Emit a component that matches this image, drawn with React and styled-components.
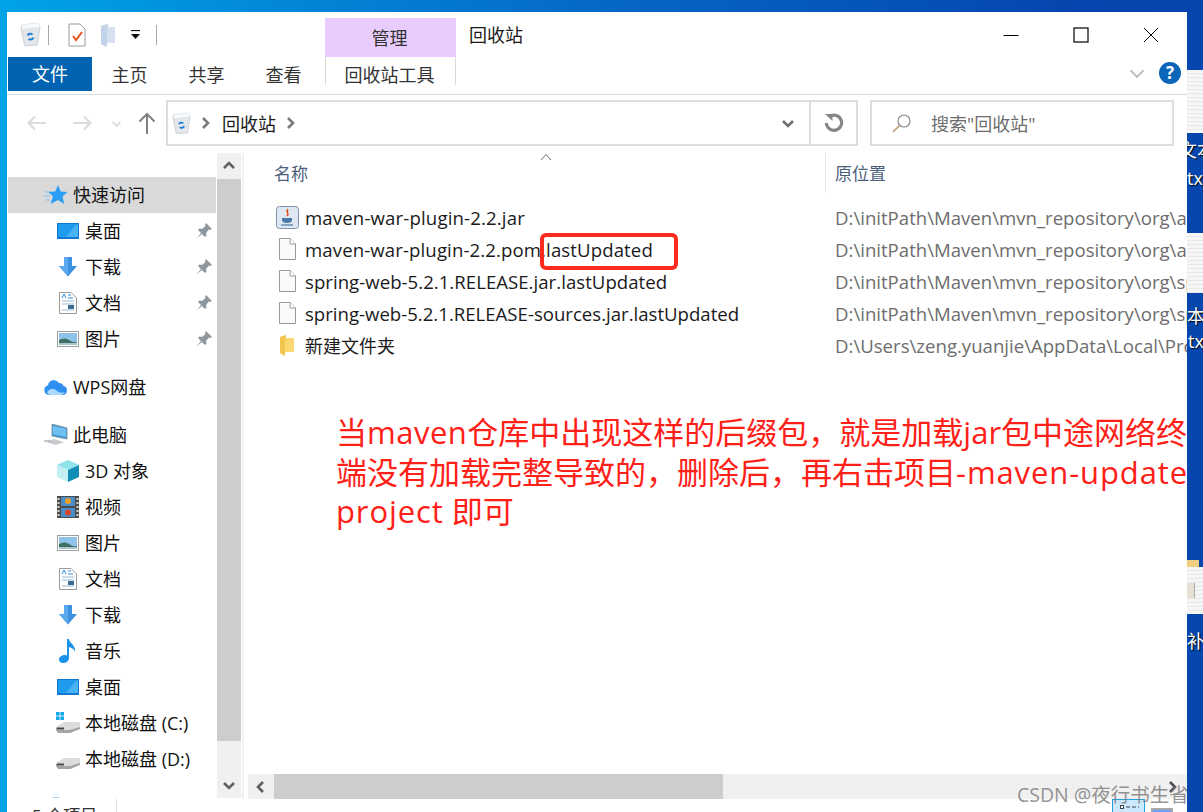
import styled, { createGlobalStyle } from 'styled-components';

const GlobalStyle = createGlobalStyle`
  html, body {
    margin: 0;
    padding: 0;
    overflow: hidden;
    background: #0746ac;
  }
  * {
    box-sizing: border-box;
  }
`;

const Desktop = styled.div`
  position: relative;
  width: 1203px;
  height: 812px;
  padding: 12px 16px 0 7px;
  overflow: hidden;
  background: linear-gradient(90deg, #00a3e6 0%, #0568c6 50%, #0645ad 90%, #0746ac 100%);
  font-family: 'Open Sans', 'Noto Sans CJK SC', sans-serif;
  font-size: 18px;
  color: #1a1a1a;
`;

const Window = styled.div`
  position: relative;
  z-index: 1;
  display: flex;
  flex-direction: column;
  width: 1180px;
  height: 800px;
  overflow: hidden;
  background: #fff;
`;

/* title bar */
const TitleBar = styled.div`
  display: flex;
  height: 45px;
  flex: none;
`;

const QuickAccess = styled.div`
  display: flex;
  align-items: center;
  width: 318px;
  height: 45px;
  padding: 0 0 0 13px;
`;

const QuickSep = styled.div`
  width: 1px;
  height: 20px;
  background: #a8a8a8;
`;

const QuickGap = styled.div`
  flex: none;
  width: ${(p) => p.$width}px;
`;

const ContextLabel = styled.div`
  width: 131px;
  height: 39px;
  margin-top: 6px;
  padding: 2px 2px 0 0;
  text-align: center;
  line-height: 36px;
  font-size: 18px;
  color: #333;
  background: #e8ccfd;
`;

const WindowTitle = styled.div`
  margin-left: 13px;
  line-height: 47px;
  font-size: 18px;
`;

const WindowControls = styled.div`
  display: flex;
  margin-left: auto;
  padding: 2px 1px 0 0;
`;

const ControlButton = styled.div`
  display: flex;
  align-items: flex-start;
  justify-content: center;
  width: 70px;
  padding-top: 13px;
`;

/* ribbon tabs */
const Ribbon = styled.div`
  display: flex;
  flex: none;
  height: 38px;
  padding-left: 1px;
  border-bottom: 1px solid #dadada;
`;

const FileTab = styled.div`
  width: 84px;
  height: 34px;
  text-align: center;
  line-height: 35px;
  font-size: 18px;
  color: #fff;
  background: #0063b1;
`;

const Tab = styled.div`
  width: 77px;
  height: 34px;
  padding-right: 2px;
  text-align: center;
  line-height: 37px;
  font-size: 18px;
  color: #333;
`;

const ToolTab = styled(Tab)`
  width: 131px;
  height: 28px;
  margin-left: 2px;
  line-height: 37px;
  overflow: visible;
  border-left: 1px solid #dadada;
  border-right: 1px solid #dadada;
`;

const RibbonRight = styled.div`
  display: flex;
  align-items: center;
  gap: 13px;
  margin-left: auto;
  padding: 0 6px 6px 0;
`;

const HelpBadge = styled.div`
  width: 22px;
  height: 22px;
  border-radius: 50%;
  text-align: center;
  line-height: 22px;
  font-size: 17px;
  font-weight: 700;
  color: #fff;
  background: #0a66b8;
`;

/* address row */
const AddressRow = styled.div`
  display: flex;
  flex: none;
  height: 58px;
  padding-top: 5px;
`;

const NavButtons = styled.div`
  display: flex;
  align-items: center;
  width: 159px;
  height: 46px;
  padding-left: 8px;
`;

const NavButton = styled.div`
  display: flex;
  align-items: center;
  justify-content: center;
  width: ${(p) => p.$width}px;
`;

const AddressBox = styled.div`
  display: flex;
  align-items: center;
  width: 692px;
  height: 46px;
  padding-left: 4px;
  border: 2px solid #dedede;
`;

const AddressIcon = styled.div`
  display: flex;
  margin-right: 7px;
`;

const Crumb = styled.span`
  margin: 0 7px 0 10px;
  font-size: 18px;
`;

const AddressEnd = styled.div`
  display: flex;
  align-items: center;
  height: 100%;
  margin-left: auto;
`;

const AddressCaret = styled.div`
  display: flex;
  align-items: center;
  justify-content: center;
  width: 45px;
  height: 100%;
  border-right: 2px solid #dedede;
`;

const RefreshButton = styled.div`
  display: flex;
  align-items: center;
  justify-content: center;
  width: 45px;
`;

const SearchBox = styled.div`
  display: flex;
  align-items: center;
  gap: 20px;
  width: 304px;
  height: 46px;
  margin-left: 12px;
  padding-left: 20px;
  font-size: 18px;
  color: #6d6d6d;
  border: 2px solid #dedede;
`;

/* body */
const Body = styled.div`
  display: flex;
  flex: none;
  height: 646px;
  padding-left: 1px;
`;

const Sidebar = styled.div`
  flex: none;
  width: 209px;
  height: 645px;
  padding-top: 24px;
  overflow: hidden;
`;

const NavGroup = styled.div`
  margin-bottom: 12px;
`;

const NavRow = styled.div`
  display: flex;
  align-items: center;
  height: 36px;
  width: 208px;
  padding-left: ${(p) => (p.$child ? 48 : 36)}px;
  background: ${(p) => (p.$active ? '#d9d9d9' : 'transparent')};
`;

const NavIcon = styled.div`
  display: flex;
  align-items: center;
  justify-content: center;
  flex: none;
  width: 24px;
  height: 26px;
  margin-right: 5px;
`;

const NavLabel = styled.span`
  flex: 1;
  padding-bottom: 2px;
  white-space: nowrap;
  font-size: 18px;
  color: #111;
`;

const PinSlot = styled.div`
  display: flex;
  margin-right: 4px;
`;

const VScroll = styled.div`
  display: flex;
  flex-direction: column;
  flex: none;
  width: 24px;
  height: 645px;
  background: #f0f0f0;
`;

const ScrollArrow = styled.div`
  display: flex;
  align-items: center;
  justify-content: center;
  flex: none;
  width: ${(p) => p.$size || 24}px;
  height: ${(p) => p.$high || 26}px;
`;

const VThumb = styled.div`
  flex: none;
  height: 562px;
  background: #cdcdcd;
`;

const VSpacer = styled.div`
  flex: 1;
`;

const PaneDivider = styled.div`
  flex: none;
  width: 4px;
  margin-left: 1px;
  border-left: 2px solid #f2f2f2;
`;

const Main = styled.div`
  display: flex;
  flex-direction: column;
  flex: 1;
  min-width: 0;
`;

const HeaderRow = styled.div`
  position: relative;
  display: grid;
  grid-template-columns: 579px 1fr;
  flex: none;
  height: 40px;
`;

const HeaderCell = styled.div`
  height: 40px;
  line-height: 41px;
  font-size: 17px;
  color: #4c607a;
  padding-left: ${(p) => p.$left}px;
  border-left: ${(p) => (p.$divider ? '1px solid #e5e5e5' : 'none')};
`;

const SortCaret = styled.div`
  position: absolute;
  left: 294px;
  top: 0;
  line-height: 0;
`;

const FileList = styled.div`
  flex: 1;
  padding-top: 8px;
  overflow: hidden;
`;

const FileRow = styled.div`
  display: grid;
  grid-template-columns: 579px 1fr;
  align-items: center;
  height: 32px;
  font-size: 18.6px;
`;

const FileName = styled.div`
  display: flex;
  align-items: center;
  padding-left: 29px;
  white-space: nowrap;
  letter-spacing: ${(p) => p.$track || 0}px;
  ${(p) => p.$cjk && 'font-size: 18px;'}
`;

const FileIcon = styled.div`
  display: flex;
  align-items: center;
  justify-content: center;
  flex: none;
  width: 24px;
  margin-right: 6px;
`;

const FileLocation = styled.div`
  padding-left: 10px;
  white-space: nowrap;
  overflow: hidden;
  color: #6d6d6d;
`;

const HScroll = styled.div`
  display: flex;
  flex: none;
  height: 25px;
  margin-left: 2px;
  background: #f0f0f0;
`;

const HThumb = styled.div`
  width: 449px;
  background: #cdcdcd;
`;

const HRight = styled.div`
  display: flex;
  align-items: center;
  justify-content: center;
  width: 26px;
  margin-left: auto;
  margin-right: 2px;
`;

/* status bar */
const StatusBar = styled.div`
  display: flex;
  flex: none;
  height: 34px;
  padding-left: 25px;
  line-height: 34px;
  font-size: 17px;
  color: #333;
`;

const StatusCount = styled.div`
  width: 85px;
  height: 34px;
  border-right: 1px solid #e0e0e0;
`;

const ViewButtons = styled.div`
  display: flex;
  gap: 6px;
  margin-left: auto;
  padding-right: 14px;
`;

const ViewDetails = styled.div`
  width: 33px;
  height: 30px;
  padding: 4px 0 0 7px;
  line-height: 0;
  background: #cce8ff;
  border: 1px solid #26a0da;
`;

const ViewLarge = styled.div`
  width: 22px;
  height: 22px;
  margin-top: 9px;
  border: 2px solid #a8a8a8;
  background: linear-gradient(#6f9eff 0 8px, #fff 8px);
`;

/* things drawn over the window */
const RedBox = styled.div`
  position: absolute;
  left: 533px;
  top: 221px;
  width: 138px;
  height: 37px;
  border: 4px solid #fb2a1e;
  border-radius: 6px;
`;

const Annotation = styled.div`
  position: absolute;
  left: 329px;
  top: 401px;
  white-space: nowrap;
  font-size: 31px;
  line-height: 39.5px;
  color: #ff2018;
`;

const Latin = styled.span`
  letter-spacing: ${(p) => p.$track}px;
`;

const Watermark = styled.div`
  position: absolute;
  left: 1010px;
  top: 767px;
  white-space: nowrap;
  font-size: 19.5px;
  color: rgba(120, 120, 120, 0.8);
`;

const DesktopFile = styled.div`
  position: absolute;
  left: 1187px;
  top: ${(p) => p.$top}px;
  width: 16px;
  height: ${(p) => p.$high}px;
  background: repeating-linear-gradient(#f6f6f6 0 3px, #e8e8e8 3px 4px);
`;

const DesktopFolderTab = styled.div`
  position: absolute;
  left: 1187px;
  top: 560px;
  width: 12px;
  height: 7px;
  background: #f0d080;
`;

const DesktopThumb = styled.div`
  position: absolute;
  left: 1187px;
  top: 583px;
  width: 8px;
  height: 15px;
  background: #e7e1d4;
  border-right: 1px solid #a8a8a8;
`;

const DesktopLabel = styled.div`
  position: absolute;
  left: ${(p) => p.$left}px;
  top: ${(p) => p.$top}px;
  white-space: nowrap;
  font-size: 18px;
  line-height: 20px;
  color: #fff;
  text-shadow: 1px 1px 1px #000;
`;

/* icons */
function RecycleBin({ size = 21 }) {
  return (
    <svg width={size} height={size * 1.15} viewBox="0 0 22 25">
      <path d="M2 3 L19 1 L21 5 L18 24 L5 25 L1 6 Z" fill="#e3e6ea" stroke="#c3c8cd" strokeWidth="0.8" />
      <path d="M2 3 L19 1 L21 5 L2 7 Z" fill="#f8f9fa" />
      <path d="M8 14 a3 3 0 0 1 5 -1 M14 16 a3 3 0 0 1 -5 1.4" fill="none" stroke="#1b7ed6" strokeWidth="2" />
    </svg>
  );
}

const CheckDoc = () => (
  <svg width="18" height="24" viewBox="0 0 18 24">
    <path d="M1 1 H12 L17 6 V23 H1 Z" fill="#fff" stroke="#9b9b9b" />
    <path d="M5 13 L8 17 L14 9" fill="none" stroke="#e8541c" strokeWidth="2" />
  </svg>
);

const PaleFolder = () => (
  <svg width="16" height="24" viewBox="0 0 16 24">
    <path d="M1 3 L8 1 V4 H15 V20 H7 V24 L1 21 Z" fill="#d6e1f0" />
    <path d="M8 1 L1 3 V21 L7 24 V7 Z" fill="#c2d2e8" />
  </svg>
);

const QuickCaret = () => (
  <svg width="11" height="10" viewBox="0 0 11 10">
    <path d="M1 0.5 H10" stroke="#111" strokeWidth="1.2" />
    <path d="M1 4 H10 L5.5 9 Z" fill="#111" />
  </svg>
);

const MinIcon = () => (
  <svg width="16" height="16" viewBox="0 0 16 16">
    <path d="M0.5 8.5 H15.5" stroke="#000" strokeWidth="1" />
  </svg>
);

const MaxIcon = () => (
  <svg width="16" height="16" viewBox="0 0 16 16">
    <rect x="1" y="1" width="14" height="14" fill="none" stroke="#000" strokeWidth="1.2" />
  </svg>
);

const CloseIcon = () => (
  <svg width="16" height="16" viewBox="0 0 16 16">
    <path d="M1 1 L15 15 M15 1 L1 15" stroke="#000" strokeWidth="1" />
  </svg>
);

const Chevron = ({ dir = 'down', color = '#606060', size = 14, width = 2.6 }) => {
  const paths = {
    down: 'M2 5 L7 10 L12 5',
    up: 'M2 9 L7 4 L12 9',
    left: 'M9 2 L4 7 L9 12',
    right: 'M5 2 L10 7 L5 12',
  };
  return (
    <svg width={size} height={size} viewBox="0 0 14 14">
      <path d={paths[dir]} fill="none" stroke={color} strokeWidth={width} />
    </svg>
  );
};

const ArrowH = ({ flip, color }) => (
  <svg width="20" height="16" viewBox="0 0 20 16" style={flip ? { transform: 'scaleX(-1)' } : undefined}>
    <path d="M19 8 H2 M8 1.5 L1.5 8 L8 14.5" fill="none" stroke={color} strokeWidth="2.2" />
  </svg>
);

const ArrowUp = () => (
  <svg width="18" height="22" viewBox="0 0 18 22">
    <path d="M9 22 V2 M1.5 9.5 L9 2 L16.5 9.5" fill="none" stroke="#808080" strokeWidth="2" />
  </svg>
);

const RefreshIcon = () => (
  <svg width="20" height="20" viewBox="0 0 20 20">
    <path d="M6 3.2 A7.6 7.6 0 1 1 2.4 10" fill="none" stroke="#868686" strokeWidth="3.2" />
    <path d="M1 1 H8.5 V8 Z" fill="#868686" />
  </svg>
);

const SearchIcon = () => (
  <svg width="19" height="19" viewBox="0 0 19 19">
    <circle cx="12" cy="7" r="6" fill="none" stroke="#8a8a8a" strokeWidth="1.2" />
    <path d="M7.5 11.5 L1 18" stroke="#c09a6a" strokeWidth="1.6" />
  </svg>
);

const SortUp = () => (
  <svg width="12" height="8" viewBox="0 0 12 8">
    <path d="M1 7 L6 1.5 L11 7" fill="none" stroke="#6d6d6d" strokeWidth="1" />
  </svg>
);

const StarIcon = () => (
  <svg width="24" height="20" viewBox="0 0 24 20">
    <path d="M1 7 H7 M0 11 H6 M2 15 H6" stroke="#7cc4f5" strokeWidth="1.2" />
    <path d="M14 0 L16.8 6.5 L23.5 7 L18.5 11.5 L20.2 19 L14 15 L6.5 19 L9 11.5 L4.5 7 L11.2 6.5 Z" fill="#2a9df4" />
  </svg>
);

const DesktopIcon = () => (
  <svg width="22" height="16" viewBox="0 0 22 16">
    <rect width="22" height="16" fill="#0f78d0" />
    <path d="M1 1 H21 V14 H1 Z" fill="#1f9cf0" />
    <path d="M9 14 L18 3 L21 1 V14 Z" fill="#47b3f5" />
  </svg>
);

const DownloadIcon = () => (
  <svg width="20" height="20" viewBox="0 0 20 20">
    <path d="M6 0 H14 V9 H19 L10 19.5 L1 9 H6 Z" fill="#3d92e0" />
    <path d="M6 0 H10 V19.5 L1 9 H6 Z" fill="#5aa9ec" />
  </svg>
);

const DocIcon = () => (
  <svg width="18" height="22" viewBox="0 0 18 22">
    <path d="M0.5 0.5 H12 L17.5 6 V21.5 H0.5 Z" fill="#fff" stroke="#9a9a9a" />
    <path d="M3 9 H15 M3 12 H15 M3 18 H15" stroke="#9ab8d8" />
    <path d="M3 6 L5 2 L7 6 M9 3 H12 M9 6 H14" fill="none" stroke="#2c8fe0" />
    <rect x="9" y="13" width="6" height="4" fill="#3a6c8f" />
  </svg>
);

const PictureIcon = () => (
  <svg width="22" height="16" viewBox="0 0 22 16">
    <rect x="0.5" y="0.5" width="21" height="15" fill="#fff" stroke="#a0a0a0" />
    <rect x="2" y="2" width="18" height="12" fill="#8fc2e8" />
    <path d="M2 9 Q8 6 12 9 T20 11 V14 H2 Z" fill="#3f6f62" />
    <path d="M2 12 H20 V14 H2 Z" fill="#a9c6cf" />
  </svg>
);

const CloudIcon = () => (
  <svg width="24" height="16" viewBox="0 0 24 16">
    <path d="M5 16 a5 5 0 0 1 -1 -9.8 A6 6 0 0 1 15 4 a4.6 4.6 0 0 1 4.5 3 a4.6 4.6 0 0 1 -.5 9 Z" fill="#2e8ff0" />
    <path d="M3 13 Q8 7 13 12 Q17 15 21 13 Q19 16 17 16 H6 Q4 16 3 13 Z" fill="#a8d8fb" />
  </svg>
);

const ComputerIcon = () => (
  <svg width="24" height="22" viewBox="0 0 24 22">
    <path d="M8 0 L23 4 V15 L8 12 Z" fill="#3f9fde" stroke="#7b8a96" strokeWidth="0.8" />
    <path d="M9 2 L22 5 V13 L9 10 Z" fill="#6ec1f0" />
    <path d="M2 18 L10 15 L20 18 L12 21 Z" fill="#c7cbcf" />
    <path d="M0 17 H7" stroke="#b5b5b5" strokeWidth="1.5" />
  </svg>
);

const CubeIcon = () => (
  <svg width="22" height="22" viewBox="0 0 22 22">
    <path d="M11 0 L22 5 L11 10 L0 5 Z" fill="#8fe3ea" />
    <path d="M0 5 L11 10 V22 L0 17 Z" fill="#c2f0f2" />
    <path d="M22 5 L11 10 V22 L22 17 Z" fill="#0f8db5" />
  </svg>
);

const FilmIcon = () => (
  <svg width="22" height="22" viewBox="0 0 22 22">
    <rect width="22" height="22" fill="#4a4a4a" />
    <path d="M1.5 2 V20 M20.5 2 V20" stroke="#d8d8d8" strokeWidth="2" strokeDasharray="2 2" />
    <rect x="4" y="1" width="14" height="9" fill="#4a8fc7" />
    <rect x="4" y="12" width="14" height="9" fill="#4a8fc7" />
    <circle cx="11" cy="5" r="3" fill="#e8a02c" />
    <circle cx="11" cy="16.5" r="3" fill="#d8482c" />
  </svg>
);

const MusicIcon = () => (
  <svg width="18" height="24" viewBox="0 0 18 24">
    <path d="M8 0 H10 C11 5 17 6 16 13 C15 10 13 9 10 8 V19 C10 22 7 24 4 24 C1 24 0 22 0 20.5 C0 18 3 16 6 16 C7 16 7.5 16.2 8 16.5 Z" fill="#1a94ea" />
  </svg>
);

const DriveIcon = ({ windows }) => (
  <svg width="24" height="22" viewBox="0 0 24 22">
    {windows && (
      <g fill="#17a8ea">
        <rect x="0" y="0" width="3.6" height="3.6" />
        <rect x="4.4" y="0" width="3.6" height="3.6" />
        <rect x="0" y="4.4" width="3.6" height="3.6" />
        <rect x="4.4" y="4.4" width="3.6" height="3.6" />
      </g>
    )}
    <path d="M0 15 L8 10 H24 V16 L14 21 H2 Z" fill="#dcdcdc" />
    <path d="M0 15 L2 18 H14 L24 15 V17 L14 21 H2 L0 18 Z" fill="#a5a5a5" />
    <path d="M1 15.5 H8 V17.5 H1 Z" fill="#4a4a4a" />
  </svg>
);

const GlobeIcon = () => (
  <svg width="22" height="22" viewBox="0 0 22 22">
    <circle cx="11" cy="11" r="10" fill="#8dc6e8" />
  </svg>
);

const PinIcon = () => (
  <svg width="16" height="16" viewBox="0 0 16 16">
    <path d="M10 0 L16 6 L14.5 7 L13 6.5 L10 10 L10.5 12.5 L9 14 L2 7 L3.5 5.5 L6 6 L9.5 3 L9 1.5 Z" fill="#8f979e" />
    <path d="M5 10 L0.5 15.5 L6 11 Z" fill="#8f979e" />
  </svg>
);

const JavaIcon = () => (
  <svg width="23" height="23" viewBox="0 0 23 23">
    <rect x="0.5" y="0.5" width="22" height="22" rx="3" fill="#dfe8f2" stroke="#7c94ad" />
    <path d="M12 3 C9 6 14 7 11 10" fill="none" stroke="#d8541e" strokeWidth="1.6" />
    <path d="M6 12 H16 V14 C16 16 14 17 11 17 C8 17 6 16 6 14 Z" fill="#4a78a8" />
    <path d="M5 19 H17" stroke="#4a78a8" strokeWidth="1.2" />
  </svg>
);

const BlankFile = () => (
  <svg width="17" height="22" viewBox="0 0 17 22">
    <path d="M0.5 0.5 H11 L16.5 6 V21.5 H0.5 Z" fill="#fafafa" stroke="#9a9a9a" />
    <path d="M11 0.5 V6 H16.5" fill="#fff" stroke="#9a9a9a" />
  </svg>
);

const FolderIcon = () => (
  <svg width="16" height="21" viewBox="0 0 16 21">
    <path d="M1 2 L7 0 V3 H15 V17 H6 V21 L1 18 Z" fill="#fbd970" />
    <path d="M7 0 L1 2 V18 L6 21 V6 Z" fill="#f0c650" />
  </svg>
);

const DetailsIcon = () => (
  <svg width="20" height="20" viewBox="0 0 20 20">
    <rect x="0.5" y="1.5" width="3" height="3" fill="#fff" stroke="#444" />
    <path d="M6 3 H19 M6 9 H19" stroke="#444" strokeDasharray="4 2" />
  </svg>
);

const quickRows = [
  { label: '桌面', icon: <DesktopIcon /> },
  { label: '下载', icon: <DownloadIcon /> },
  { label: '文档', icon: <DocIcon /> },
  { label: '图片', icon: <PictureIcon /> },
];

const pcRows = [
  { label: '3D 对象', icon: <CubeIcon /> },
  { label: '视频', icon: <FilmIcon /> },
  { label: '图片', icon: <PictureIcon /> },
  { label: '文档', icon: <DocIcon /> },
  { label: '下载', icon: <DownloadIcon /> },
  { label: '音乐', icon: <MusicIcon /> },
  { label: '桌面', icon: <DesktopIcon /> },
  { label: '本地磁盘 (C:)', icon: <DriveIcon windows /> },
  { label: '本地磁盘 (D:)', icon: <DriveIcon /> },
];

const repoPath = 'D:\\initPath\\Maven\\mvn_repository\\org\\';

const files = [
  { name: 'maven-war-plugin-2.2.jar', icon: <JavaIcon />, location: repoPath + 'apache\\maven', track: 0.15 },
  { name: 'maven-war-plugin-2.2.pom.lastUpdated', icon: <BlankFile />, location: repoPath + 'apache\\maven', track: 0.11 },
  { name: 'spring-web-5.2.1.RELEASE.jar.lastUpdated', icon: <BlankFile />, location: repoPath + 'springframework', track: 0.03 },
  { name: 'spring-web-5.2.1.RELEASE-sources.jar.lastUpdated', icon: <BlankFile />, location: repoPath + 'springframework' },
  { name: '新建文件夹', icon: <FolderIcon />, location: 'D:\\Users\\zeng.yuanjie\\AppData\\Local\\Programs', cjk: true },
];

function Nav({ label, icon, child, pinned, active }) {
  return (
    <NavRow $child={child} $active={active}>
      <NavIcon>{icon}</NavIcon>
      <NavLabel>{label}</NavLabel>
      {pinned && (
        <PinSlot>
          <PinIcon />
        </PinSlot>
      )}
    </NavRow>
  );
}

export default function App() {
  return (
    <>
      <GlobalStyle />
      <Desktop>
        <Window>
          <TitleBar>
            <QuickAccess>
              <RecycleBin />
              <QuickGap $width={7} />
              <QuickSep />
              <QuickGap $width={19} />
              <CheckDoc />
              <QuickGap $width={14} />
              <PaleFolder />
              <QuickGap $width={14} />
              <QuickCaret />
              <QuickGap $width={15} />
              <QuickSep />
            </QuickAccess>
            <ContextLabel>管理</ContextLabel>
            <WindowTitle>回收站</WindowTitle>
            <WindowControls>
              <ControlButton>
                <MinIcon />
              </ControlButton>
              <ControlButton>
                <MaxIcon />
              </ControlButton>
              <ControlButton>
                <CloseIcon />
              </ControlButton>
            </WindowControls>
          </TitleBar>

          <Ribbon>
            <FileTab>文件</FileTab>
            <Tab>主页</Tab>
            <Tab>共享</Tab>
            <Tab>查看</Tab>
            <ToolTab>回收站工具</ToolTab>
            <RibbonRight>
              <Chevron color="#b9b9b9" size={18} width={1.4} />
              <HelpBadge>?</HelpBadge>
            </RibbonRight>
          </Ribbon>

          <AddressRow>
            <NavButtons>
              <NavButton $width={44}>
                <ArrowH color="#dcdcdc" />
              </NavButton>
              <NavButton $width={46}>
                <ArrowH flip color="#dcdcdc" />
              </NavButton>
              <NavButton $width={22}>
                <Chevron color="#dcdcdc" size={11} width={2.4} />
              </NavButton>
              <NavButton $width={39}>
                <ArrowUp />
              </NavButton>
            </NavButtons>
            <AddressBox>
              <AddressIcon>
                <RecycleBin size={19} />
              </AddressIcon>
              <Chevron dir="right" color="#7a7a7a" size={14} />
              <Crumb>回收站</Crumb>
              <Chevron dir="right" color="#7a7a7a" size={14} />
              <AddressEnd>
                <AddressCaret>
                  <Chevron color="#707070" size={14} />
                </AddressCaret>
                <RefreshButton>
                  <RefreshIcon />
                </RefreshButton>
              </AddressEnd>
            </AddressBox>
            <SearchBox>
              <SearchIcon />
              <span>搜索"回收站"</span>
            </SearchBox>
          </AddressRow>

          <Body>
            <Sidebar>
              <NavGroup>
                <Nav label="快速访问" icon={<StarIcon />} active />
                {quickRows.map((row) => (
                  <Nav key={row.label} label={row.label} icon={row.icon} child pinned />
                ))}
              </NavGroup>
              <NavGroup>
                <Nav label="WPS网盘" icon={<CloudIcon />} />
              </NavGroup>
              <NavGroup>
                <Nav label="此电脑" icon={<ComputerIcon />} />
                {pcRows.map((row) => (
                  <Nav key={row.label} label={row.label} icon={row.icon} child />
                ))}
              </NavGroup>
              <Nav label="网络" icon={<GlobeIcon />} />
            </Sidebar>

            <VScroll>
              <ScrollArrow>
                <Chevron dir="up" />
              </ScrollArrow>
              <VThumb />
              <VSpacer />
              <ScrollArrow>
                <Chevron />
              </ScrollArrow>
            </VScroll>
            <PaneDivider />

            <Main>
              <HeaderRow>
                <HeaderCell $left={28}>名称</HeaderCell>
                <HeaderCell $left={9} $divider>
                  原位置
                </HeaderCell>
                <SortCaret>
                  <SortUp />
                </SortCaret>
              </HeaderRow>
              <FileList>
                {files.map((file) => (
                  <FileRow key={file.name}>
                    <FileName $cjk={file.cjk} $track={file.track}>
                      <FileIcon>{file.icon}</FileIcon>
                      {file.name}
                    </FileName>
                    <FileLocation>{file.location}</FileLocation>
                  </FileRow>
                ))}
              </FileList>
              <HScroll>
                <ScrollArrow $size={26} $high={25}>
                  <Chevron dir="left" />
                </ScrollArrow>
                <HThumb />
                <HRight>
                  <Chevron dir="right" color="#505050" />
                </HRight>
              </HScroll>
            </Main>
          </Body>

          <StatusBar>
            <StatusCount>5 个项目</StatusCount>
            <ViewButtons>
              <ViewDetails>
                <DetailsIcon />
              </ViewDetails>
              <ViewLarge />
            </ViewButtons>
          </StatusBar>

          <RedBox />
          <Annotation>
            当<Latin $track={0.5}>maven</Latin>仓库中出现这样的后缀包，就是加载jar包中途网络终
            <br />
            端没有加载完整导致的，删除后，再右击项目<Latin $track={0.9}>-maven-update</Latin>
            <br />
            <Latin $track={0.9}>project</Latin> 即可
          </Annotation>
          <Watermark>CSDN @夜行书生省</Watermark>
        </Window>

        <DesktopFile $top={70} $high={63} />
        <DesktopLabel $left={1179} $top={140}>
          文本
        </DesktopLabel>
        <DesktopLabel $left={1187} $top={168}>
          txt
        </DesktopLabel>
        <DesktopFile $top={233} $high={60} />
        <DesktopLabel $left={1187} $top={306}>
          本
        </DesktopLabel>
        <DesktopLabel $left={1188} $top={331}>
          txt
        </DesktopLabel>
        <DesktopFolderTab />
        <DesktopFile $top={567} $high={47} />
        <DesktopThumb />
        <DesktopLabel $left={1187} $top={631}>
          补
        </DesktopLabel>
      </Desktop>
    </>
  );
}
